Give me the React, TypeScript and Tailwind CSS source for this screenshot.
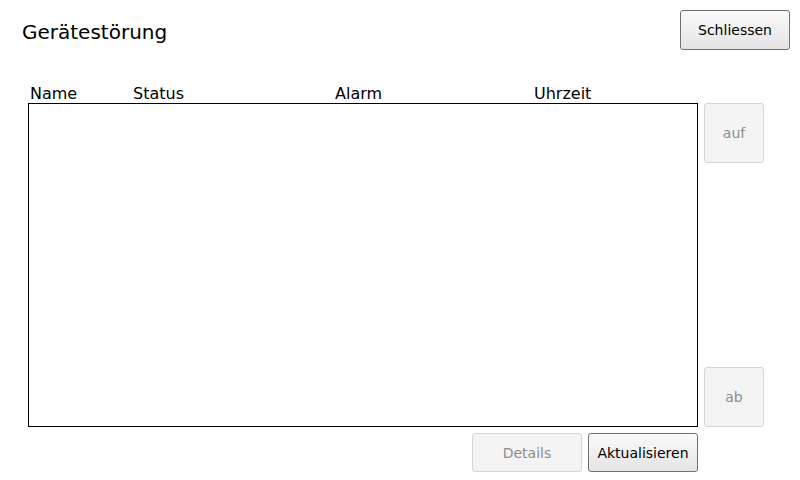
import React from "react";

const font = { fontFamily: '"DejaVu Sans", Verdana, sans-serif' };

function Btn({ children, disabled, className = "" }: { children: React.ReactNode; disabled?: boolean; className?: string }) {
  return (
    <div
      className={
        "flex items-center justify-center rounded-[3px] border text-[14px] leading-none " +
        (disabled
          ? "border-[#d4d4d4] bg-[#f4f4f4] text-[#8c8c8c] "
          : "border-[#707070] bg-gradient-to-b from-[#fbfbfb] to-[#e4e4e4] text-black ") +
        className
      }
    >
      {children}
    </div>
  );
}

export default function App() {
  return (
    <div className="w-[800px] h-[480px] bg-white flex flex-col pt-[10px]" style={font}>
      <div className="flex items-center justify-between h-[40px] pl-[22px] pr-[10px]">
        <div className="pt-[3px] text-[20px] text-black leading-none">Gerätestörung</div>
        <Btn className="w-[110px] h-[40px]">Schliessen</Btn>
      </div>
      <div className="ml-[28px] mt-[34px] flex h-[19px] text-[16px] leading-[19px] text-black">
        <div className="w-[105px] pl-[2px]">Name</div>
        <div className="w-[202px]">Status</div>
        <div className="w-[199px]">Alarm</div>
        <div>Uhrzeit</div>
      </div>
      <div className="ml-[28px] flex">
        <div className="w-[670px] h-[324px] border border-black bg-white" />
        <div className="ml-[6px] flex h-[324px] flex-col justify-between">
          <Btn disabled className="w-[60px] h-[60px]">auf</Btn>
          <Btn disabled className="w-[60px] h-[60px]">ab</Btn>
        </div>
      </div>
      <div className="ml-[28px] mt-[6px] flex w-[670px] justify-end gap-[6px]">
        <Btn disabled className="w-[110px] h-[39px]">Details</Btn>
        <Btn className="w-[110px] h-[39px]">Aktualisieren</Btn>
      </div>
    </div>
  );
}
